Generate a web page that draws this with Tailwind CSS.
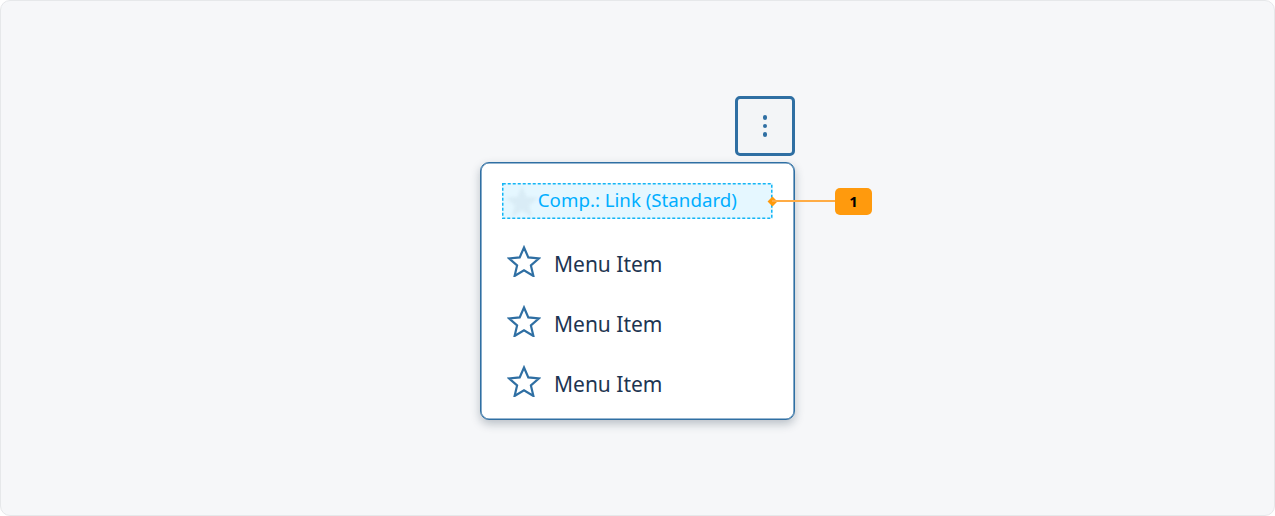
<!DOCTYPE html>
<html lang="en">
<head>
    <meta charset="UTF-8">
    <title>Menu</title>
    <script src="https://cdn.jsdelivr.net/npm/@tailwindcss/browser@4"></script>
</head>
<body class="bg-white font-['Noto_Sans',sans-serif]">
    <div class="w-[1275px] h-[516px] bg-[#f6f7f9] border border-[#e6e8ea] rounded-[10px] flex justify-center pt-[95px]">
        <div class="w-[315px] flex flex-col items-end gap-[6px] relative">
            <!-- Trigger -->
            <button class="w-[60px] h-[60px] border-[3px] border-[#2f6fa3] rounded-[5px] bg-[#f3f5f7] flex flex-col items-center justify-center gap-[4px]">
                <span class="w-[4.500px] h-[4.500px] rounded-full bg-[#2f6fa3]"></span>
                <span class="w-[4.500px] h-[4.500px] rounded-full bg-[#2f6fa3]"></span>
                <span class="w-[4.500px] h-[4.500px] rounded-full bg-[#2f6fa3]"></span>
            </button>

            <!-- Menu -->
            <div class="w-[315px] h-[258px] bg-white border border-[#2f6fa3] rounded-[9px] shadow-[inset_0_0_0_0.6px_#2f6fa3,0_4px_10px_rgba(30,50,70,0.28)] pt-[20px] pl-[21.300px]">
                <div class="w-[270.500px] h-[36px] bg-[#e5f7ff] flex items-center relative">
                    <svg class="absolute inset-0" width="270.500" height="36" fill="none"><rect x="0.750" y="0.750" width="269" height="34.500" stroke="#12b5f5" stroke-width="1.500" stroke-dasharray="3 2"/></svg>
                    <svg class="w-[34px] h-[32px] ml-[3px] blur-[1.500px] text-[#d9ecf6]" viewBox="0 0 34 32" fill="currentColor"><path d="M17 1l4.600 10.800 11.400 1-8.700 7.600 2.700 11.300-10-6.100-10 6.100 2.700-11.300-8.700-7.600 11.400-1z"/></svg>
                    <span class="text-[18.700px] leading-none text-[#00aeff] ml-[-1.500px] pb-[2px] whitespace-nowrap">Comp.: Link (Standard)</span>
                    <!-- Callout -->
                    <span class="absolute left-[266.500px] top-[14.500px] w-[7px] h-[7px] bg-[#ff9a0d] rotate-45"></span>
                    <span class="absolute left-[270px] top-[17px] w-[64px] h-[2px] bg-[#ffac45]"></span>
                    <span class="absolute left-[332.700px] top-[5px] w-[37px] h-[27px] bg-[#ff9a0d] rounded-[5px] flex items-center justify-center text-[15px] font-bold text-black">1</span>
                </div>
                <div class="mt-[15px] flex flex-col">
                    <div class="h-[60px] flex items-center gap-[13px] pl-[4.700px]">
                        <svg class="w-[34px] h-[32px] mt-[-6px]" viewBox="0 0 34 32" fill="none" stroke="#2f6fa3" stroke-width="2.200"><path d="M17 2.500l4.300 9.900 10.700 1-8.100 7.100 2.500 10.500-9.400-5.600-9.400 5.600 2.500-10.500-8.100-7.100 10.700-1z"/></svg>
                        <span class="text-[21px] leading-none text-[#1d3552]">Menu Item</span>
                    </div>
                    <div class="h-[60px] flex items-center gap-[13px] pl-[4.700px]">
                        <svg class="w-[34px] h-[32px] mt-[-6px]" viewBox="0 0 34 32" fill="none" stroke="#2f6fa3" stroke-width="2.200"><path d="M17 2.500l4.300 9.900 10.700 1-8.100 7.100 2.500 10.500-9.400-5.600-9.400 5.600 2.500-10.500-8.100-7.100 10.700-1z"/></svg>
                        <span class="text-[21px] leading-none text-[#1d3552]">Menu Item</span>
                    </div>
                    <div class="h-[60px] flex items-center gap-[13px] pl-[4.700px]">
                        <svg class="w-[34px] h-[32px] mt-[-6px]" viewBox="0 0 34 32" fill="none" stroke="#2f6fa3" stroke-width="2.200"><path d="M17 2.500l4.300 9.900 10.700 1-8.100 7.100 2.500 10.500-9.400-5.600-9.400 5.600 2.500-10.500-8.100-7.100 10.700-1z"/></svg>
                        <span class="text-[21px] leading-none text-[#1d3552]">Menu Item</span>
                    </div>
                </div>
            </div>
        </div>
    </div>
</body>
</html>
